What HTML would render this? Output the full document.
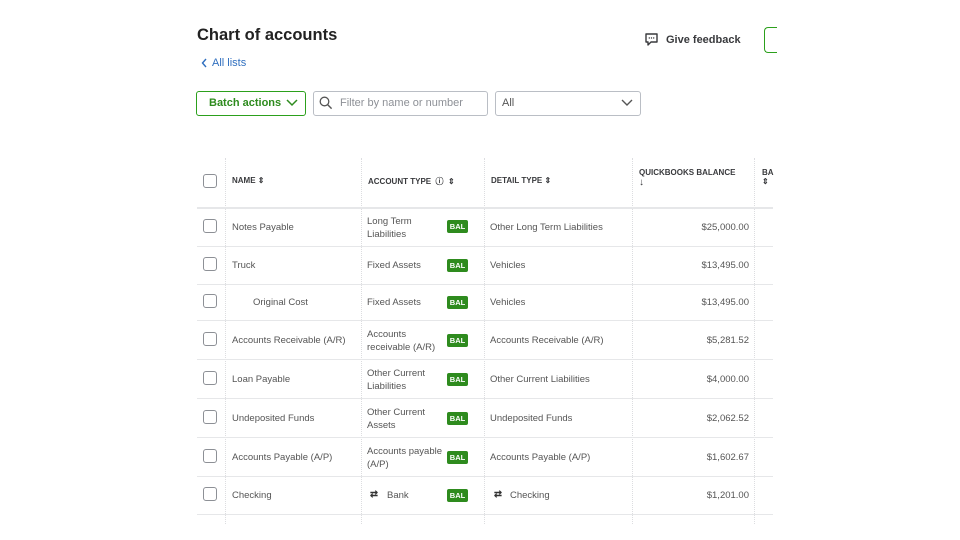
<!DOCTYPE html><html><head><style>
body{margin:0;width:960px;height:540px;background:#fff;font-family:"Liberation Sans",sans-serif;position:relative;overflow:hidden;color:#393a3d}
.a{position:absolute}
.t{font-size:9.5px;color:#555}
.cb{position:absolute;left:203px;width:14px;height:14px;border:1px solid #8d9096;border-radius:3px;box-sizing:border-box}
.bal{position:absolute;left:447px;width:21px;height:13px;background:#2e8b1e;color:#fff;font-size:7.5px;font-weight:bold;text-align:center;line-height:13px;border-radius:2px}
.hl{position:absolute;left:197px;width:576px;height:1px;background:#e6e7e9}
.vl{position:absolute;top:158px;height:366px;width:0;border-left:1px dotted #dcdde0}
.h{font-size:8px;font-weight:bold;color:#393a3d}
</style></head><body>
<div class="a" style="left:197px;top:26px;font-size:16.5px;font-weight:bold;color:#222">Chart of accounts</div>
<svg class="a" style="left:201px;top:58px" width="7" height="10"><path d="M5 1L1.5 5 5 9" fill="none" stroke="#2f6fbf" stroke-width="1.4"/></svg>
<div class="a" style="left:212px;top:57px;font-size:11px;color:#2f6fbf">All lists</div>
<svg class="a" style="left:644px;top:32px" width="15" height="15" viewBox="0 0 15 15"><path d="M2 2h11v8H7l-3 3v-3H2z" fill="none" stroke="#393a3d" stroke-width="1.4" stroke-linejoin="round"/><circle cx="5.3" cy="6" r=".7" fill="#393a3d"/><circle cx="7.5" cy="6" r=".7" fill="#393a3d"/><circle cx="9.7" cy="6" r=".7" fill="#393a3d"/></svg>
<div class="a" style="left:666px;top:34px;font-size:11px;font-weight:bold;color:#393a3d">Give feedback</div>
<div class="a" style="left:764px;top:27px;width:12px;height:24px;border:1.5px solid #2ca01c;border-right:none;border-radius:4px 0 0 4px"></div>
<div class="a" style="left:196px;top:91px;width:110px;height:25px;border:1px solid #2ca01c;border-radius:3px;box-sizing:border-box;font-size:11px;font-weight:bold;color:#2e8b1e;line-height:23px;padding-left:12px">Batch actions</div>
<svg class="a" style="left:286px;top:99px" width="12" height="8"><path d="M1 1l5 5 5-5" fill="none" stroke="#2e8b1e" stroke-width="1.5"/></svg>
<div class="a" style="left:313px;top:91px;width:175px;height:25px;border:1px solid #babec5;border-radius:3px;box-sizing:border-box"></div>
<svg class="a" style="left:319px;top:96px" width="14" height="14"><circle cx="5.5" cy="5.5" r="4.3" fill="none" stroke="#555" stroke-width="1.3"/><path d="M8.6 8.6l4 4" stroke="#555" stroke-width="1.4"/></svg>
<div class="a" style="left:340px;top:97px;font-size:11px;color:#8d9096">Filter by name or number</div>
<div class="a" style="left:495px;top:91px;width:146px;height:25px;border:1px solid #babec5;border-radius:3px;box-sizing:border-box;font-size:11px;color:#555;line-height:23px;padding-left:6px">All</div>
<svg class="a" style="left:621px;top:99px" width="12" height="8"><path d="M1 1l5 5 5-5" fill="none" stroke="#555" stroke-width="1.4"/></svg>
<div class="vl" style="left:225px"></div><div class="vl" style="left:361px"></div><div class="vl" style="left:484px"></div><div class="vl" style="left:632px"></div><div class="vl" style="left:754px"></div>
<div class="hl" style="top:207px;height:2px"></div>
<div class="hl" style="top:246px"></div><div class="hl" style="top:284px"></div><div class="hl" style="top:320px"></div><div class="hl" style="top:359px"></div><div class="hl" style="top:398px"></div><div class="hl" style="top:437px"></div><div class="hl" style="top:476px"></div><div class="hl" style="top:514px"></div>
<div class="cb" style="top:174px"></div>
<div class="a h" style="left:232px;top:176px">NAME ⇕</div>
<div class="a h" style="left:368px;top:176px">ACCOUNT TYPE &nbsp;ⓘ &nbsp;⇕</div>
<div class="a h" style="left:491px;top:176px">DETAIL TYPE ⇕</div>
<div class="a h" style="left:639px;top:168px">QUICKBOOKS BALANCE<br><span style="font-size:10px">↓</span></div>
<div class="a h" style="left:762px;top:168px">BA<br>⇕</div>

<div class="cb" style="top:219px"></div><div class="a t" style="left:232px;top:222px">Notes Payable</div><div class="a t" style="left:367px;top:215px;line-height:13px">Long Term<br>Liabilities</div><div class="bal" style="top:220px">BAL</div><div class="a t" style="left:490px;top:222px">Other Long Term Liabilities</div><div class="a t" style="right:211px;top:222px">$25,000.00</div>
<div class="cb" style="top:257px"></div><div class="a t" style="left:232px;top:260px">Truck</div><div class="a t" style="left:367px;top:260px">Fixed Assets</div><div class="bal" style="top:259px">BAL</div><div class="a t" style="left:490px;top:260px">Vehicles</div><div class="a t" style="right:211px;top:260px">$13,495.00</div>
<div class="cb" style="top:294px"></div><div class="a t" style="left:253px;top:297px">Original Cost</div><div class="a t" style="left:367px;top:297px">Fixed Assets</div><div class="bal" style="top:296px">BAL</div><div class="a t" style="left:490px;top:297px">Vehicles</div><div class="a t" style="right:211px;top:297px">$13,495.00</div>
<div class="cb" style="top:332px"></div><div class="a t" style="left:232px;top:335px">Accounts Receivable (A/R)</div><div class="a t" style="left:367px;top:328px;line-height:13px">Accounts<br>receivable (A/R)</div><div class="bal" style="top:334px">BAL</div><div class="a t" style="left:490px;top:335px">Accounts Receivable (A/R)</div><div class="a t" style="right:211px;top:335px">$5,281.52</div>
<div class="cb" style="top:371px"></div><div class="a t" style="left:232px;top:374px">Loan Payable</div><div class="a t" style="left:367px;top:367px;line-height:13px">Other Current<br>Liabilities</div><div class="bal" style="top:373px">BAL</div><div class="a t" style="left:490px;top:374px">Other Current Liabilities</div><div class="a t" style="right:211px;top:374px">$4,000.00</div>
<div class="cb" style="top:410px"></div><div class="a t" style="left:232px;top:413px">Undeposited Funds</div><div class="a t" style="left:367px;top:406px;line-height:13px">Other Current<br>Assets</div><div class="bal" style="top:412px">BAL</div><div class="a t" style="left:490px;top:413px">Undeposited Funds</div><div class="a t" style="right:211px;top:413px">$2,062.52</div>
<div class="cb" style="top:449px"></div><div class="a t" style="left:232px;top:452px">Accounts Payable (A/P)</div><div class="a t" style="left:367px;top:445px;line-height:13px">Accounts payable<br>(A/P)</div><div class="bal" style="top:451px">BAL</div><div class="a t" style="left:490px;top:452px">Accounts Payable (A/P)</div><div class="a t" style="right:211px;top:452px">$1,602.67</div>
<div class="cb" style="top:487px"></div><div class="a t" style="left:232px;top:490px">Checking</div><div class="a t" style="left:370px;top:489px;font-weight:bold;color:#333">⇄</div><div class="a t" style="left:387px;top:490px">Bank</div><div class="bal" style="top:489px">BAL</div><div class="a t" style="left:494px;top:489px;font-weight:bold;color:#333">⇄</div><div class="a t" style="left:510px;top:490px">Checking</div><div class="a t" style="right:211px;top:490px">$1,201.00</div>
</body></html>
